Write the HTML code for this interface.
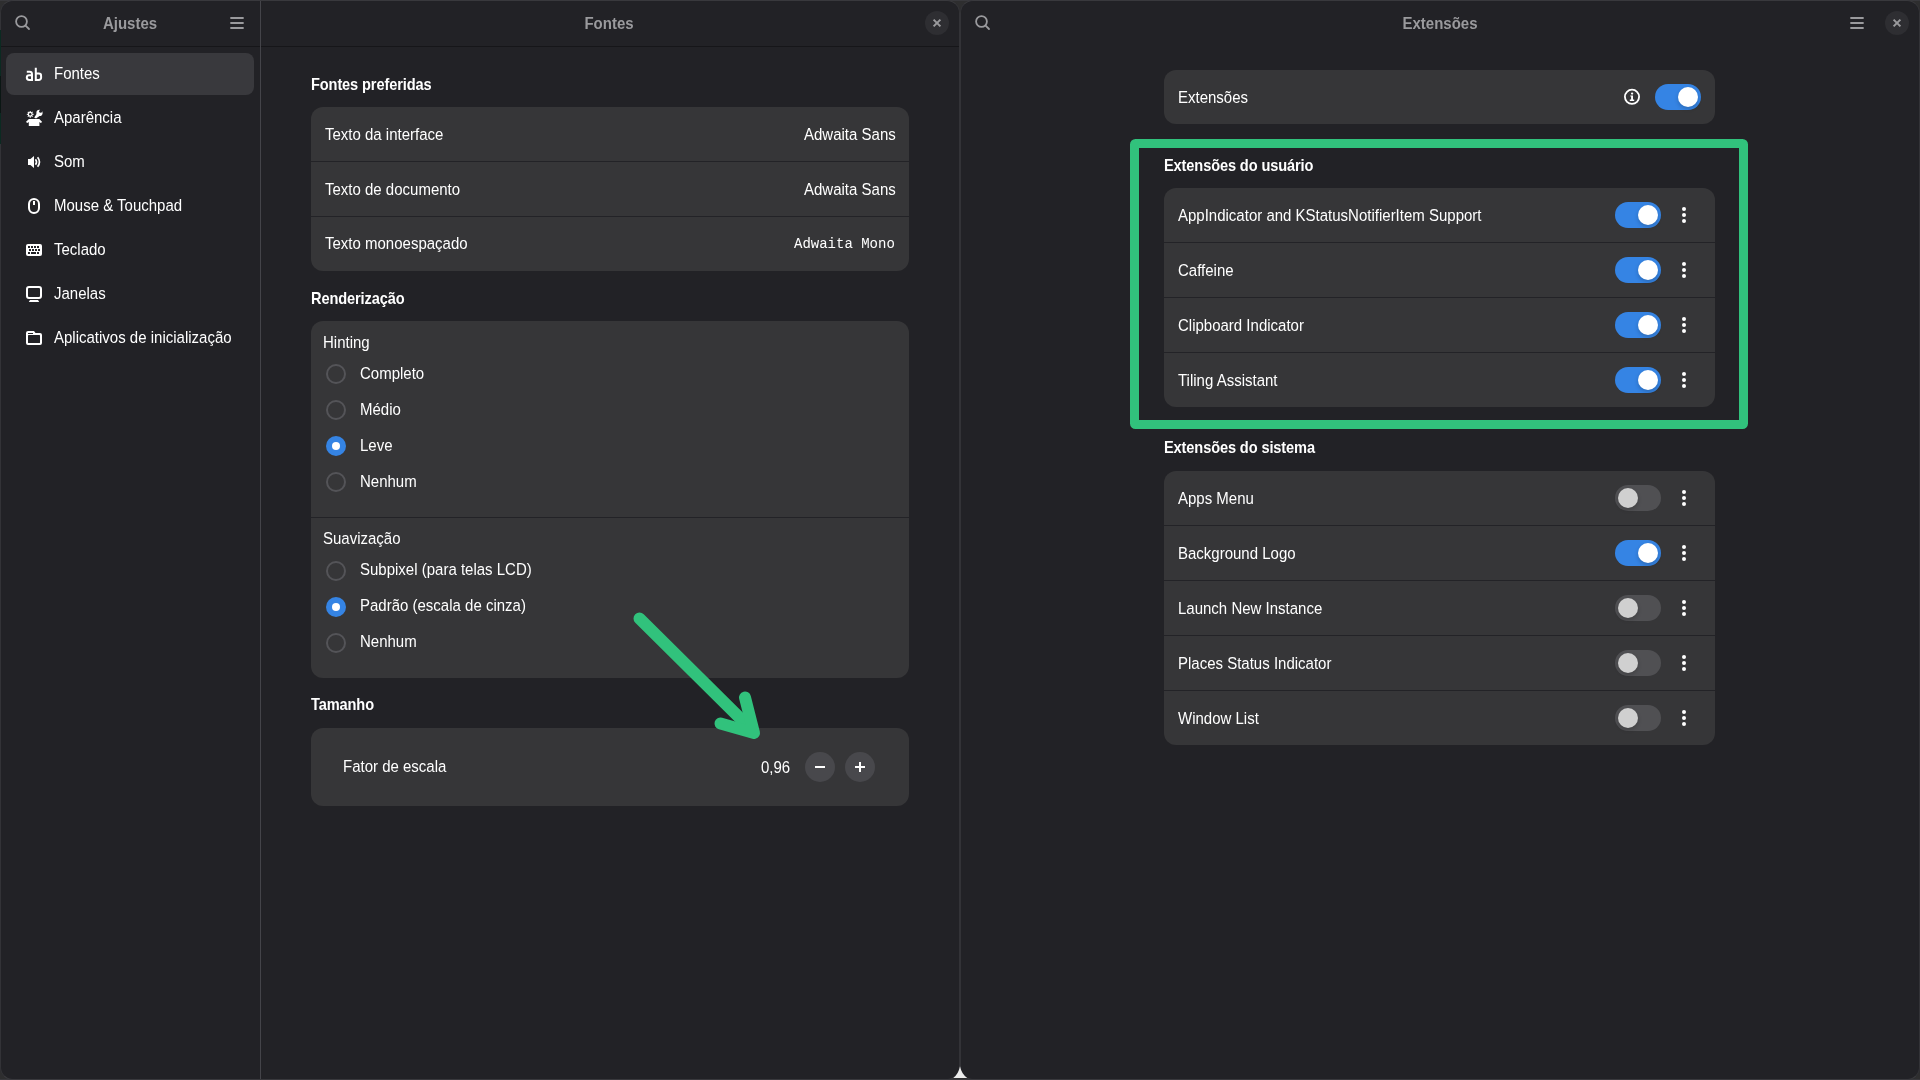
<!DOCTYPE html>
<html><head><meta charset="utf-8">
<style>
*{box-sizing:border-box;margin:0;padding:0}
html,body{width:1920px;height:1080px;overflow:hidden;background:#2e2e2f;font-family:"Liberation Sans",sans-serif;color:#ececee;font-size:15px}
.abs{position:absolute}
.win{position:absolute;background:#222226;border-radius:13px;border:1px solid #333337;border-top-color:#39393d;border-bottom-color:#39393d}
.title{font-weight:bold;color:#9a9a9d;font-size:14.5px}
.txt{will-change:transform;position:absolute;white-space:nowrap;line-height:18px;font-size:15px;transform:scaleY(1.07);transform-origin:0 14.5px}
.h{font-weight:bold;color:#fff;font-size:14.6px;letter-spacing:-0.12px;transform:scaleY(1.1)}
.side{color:#fff}
.lbl{color:#fff}
.val{color:#fff}
.mono{font-family:"Liberation Mono",monospace;font-size:14px;letter-spacing:0}
.card{position:absolute;background:#363638;border-radius:12px}
.sep{position:absolute;height:1px;background:#232327}
.sw{position:absolute;width:46px;height:26px;border-radius:13px;background:#3584e4}
.sw::after{content:"";position:absolute;top:3px;left:23px;width:20px;height:20px;border-radius:50%;background:#fff;box-shadow:0 2px 4px rgba(0,0,0,0.2)}
.sw.off{background:#505053}
.sw.off::after{left:3px;background:#d0d0d0}
.kb{position:absolute;width:4px}
.kb i{display:block;width:4px;height:4px;border-radius:50%;background:#fff;margin-bottom:2px}
.radio{position:absolute;width:20px;height:20px;border-radius:50%;border:2px solid #545458}
.radio.on{background:#3584e4;border:none}
.radio.on::after{content:"";position:absolute;left:6px;top:6px;width:8px;height:8px;border-radius:50%;background:#fff}
.btn{position:absolute;width:30px;height:30px;border-radius:50%;background:#48484c}

</style></head><body>
<div class="abs" style="left:0;top:0;width:1920px;height:1px;background:#39393d"></div>
<div class="win" style="left:0px;top:0px;width:960px;height:1080px"></div>
<div class="abs" style="left:1px;top:46px;width:958px;height:1px;background:#161619"></div>
<div class="abs" style="left:260px;top:1px;width:1px;height:1079px;background:#444449"></div>
<svg class="abs" style="left:0;top:0" width="960" height="46" viewBox="0 0 960 46">
<g fill="none" stroke="#9a9a9d" stroke-width="1.8" stroke-linecap="round">
<circle cx="21.5" cy="21.5" r="5.4"/><line x1="25.6" y1="25.6" x2="29" y2="29"/>
<line x1="231" y1="18" x2="243" y2="18"/><line x1="231" y1="23" x2="243" y2="23"/><line x1="231" y1="28" x2="243" y2="28"/>
</g>
<circle cx="937" cy="23" r="12" fill="#2e2e32"/>
<g stroke="#9a9a9d" stroke-width="2" stroke-linecap="butt"><line x1="933.6" y1="19.6" x2="940.4" y2="26.4"/><line x1="940.4" y1="19.6" x2="933.6" y2="26.4"/></g>
</svg>

<div class="txt title" style="left:-70px;width:400px;text-align:center;top:14.8px;">Ajustes</div>
<div class="txt title" style="left:409px;width:400px;text-align:center;top:14.8px;">Fontes</div>
<div class="abs" style="left:6px;top:53px;width:248px;height:42px;border-radius:8px;background:#39393d"></div>
<div class="txt side" style="left:54px;top:65.4px;">Fontes</div>
<div class="txt side" style="left:54px;top:109.4px;">Aparência</div>
<div class="txt side" style="left:54px;top:153.4px;">Som</div>
<div class="txt side" style="left:54px;top:197.4px;">Mouse &amp; Touchpad</div>
<div class="txt side" style="left:54px;top:241.4px;">Teclado</div>
<div class="txt side" style="left:54px;top:285.4px;">Janelas</div>
<div class="txt side" style="left:54px;top:329.4px;">Aplicativos de inicialização</div>
<svg class="abs" style="left:0;top:0" width="60" height="360" viewBox="0 0 60 360">
<g fill="none" stroke="#fff" stroke-width="2">
<path d="M26.8 71.8 h2.8 a2.4 2.4 0 0 1 2.4 2.4 V80 h-2.8 a2.4 2.4 0 0 1 0 -4.8 h2.8"/>
<path d="M35.8 67.8 V80 h3 a2.3 2.3 0 0 0 2.3 -2.3 v-1.8 a2.3 2.3 0 0 0 -2.3 -2.3 h-3"/>
</g>
<g fill="#fff">
<path d="M28.9 119 H39.3 L42.2 122 L40.7 123 L39.4 121.9 V126 H28.8 V121.9 L27.5 123 L25.9 122 Z"/>
<path d="M29.62 110.95 L30.78 110.95 L30.73 111.96 L31.48 112.27 L32.16 111.52 L32.98 112.34 L32.23 113.02 L32.54 113.77 L33.55 113.72 L33.55 114.88 L32.54 114.83 L32.23 115.58 L32.98 116.26 L32.16 117.08 L31.48 116.33 L30.73 116.64 L30.78 117.65 L29.62 117.65 L29.67 116.64 L28.92 116.33 L28.24 117.08 L27.42 116.26 L28.17 115.58 L27.86 114.83 L26.85 114.88 L26.85 113.72 L27.86 113.77 L28.17 113.02 L27.42 112.34 L28.24 111.52 L28.92 112.27 L29.67 111.96Z"/>
<circle cx="39.5" cy="112.9" r="3.1"/>
<path d="M34.2 117.6 L37.2 113 L40.2 115.6 L36 118.4 Z"/>
</g>
<circle cx="30.2" cy="114.3" r="1.2" fill="#222226"/>
<circle cx="40.6" cy="111.2" r="1.5" fill="#222226"/>
<path d="M39.8 109 L42.4 109 L42.4 111.8z" fill="#222226"/>
<path d="M28 159 H30.4 L34 155.9 V168.1 L30.4 165 H28 Z" fill="#fff"/>
<path d="M35.5 159.2 Q37.6 162 35.5 164.8" fill="none" stroke="#fff" stroke-width="1.6"/>
<path d="M37.6 157.3 Q41.3 162 37.6 166.7" fill="none" stroke="#fff" stroke-width="1.7"/>
<rect x="29" y="199" width="10" height="14" rx="5" fill="none" stroke="#fff" stroke-width="2"/>
<rect x="33" y="201" width="2" height="4" fill="#fff"/>
<rect x="26" y="244" width="16" height="12" rx="2" fill="#fff"/>
<g fill="#222226"><rect x="28" y="246" width="2" height="2"/><rect x="31" y="246" width="2" height="2"/><rect x="34" y="246" width="2" height="2"/><rect x="37" y="246" width="2" height="2"/>
<rect x="29" y="249" width="2" height="2"/><rect x="32" y="249" width="2" height="2"/><rect x="35" y="249" width="2" height="2"/><rect x="38" y="249" width="2" height="2"/>
<rect x="28" y="252" width="2" height="2"/><rect x="31" y="252" width="5" height="2"/><rect x="37" y="252" width="2" height="2"/></g>
<rect x="27" y="287" width="14" height="11" rx="2" fill="none" stroke="#fff" stroke-width="2"/>
<path d="M30 300 H38 L39.2 302 H28.8z" fill="#fff"/>
<path d="M26 333 a2 2 0 0 1 2 -2 h6 l1.5 2 h4.5 a2 2 0 0 1 2 2 v8 a2 2 0 0 1 -2 2 h-12 a2 2 0 0 1 -2 -2 z" fill="#fff"/>
<rect x="28" y="335" width="12" height="8" rx="0.5" fill="#222226"/>
<rect x="28" y="333" width="5" height="1" fill="#222226"/>
</svg>

<div class="txt h" style="left:311px;top:75.8px;">Fontes preferidas</div>
<div class="card" style="left:311px;top:107px;width:598px;height:164px"></div>
<div class="sep" style="left:311px;top:161px;width:598px"></div>
<div class="sep" style="left:311px;top:216px;width:598px"></div>
<div class="txt lbl" style="left:325px;top:125.8px;">Texto da interface</div>
<div class="txt val" style="right:1024.5px;top:125.8px;">Adwaita Sans</div>
<div class="txt lbl" style="left:325px;top:180.5px;">Texto de documento</div>
<div class="txt val" style="right:1024.5px;top:180.5px;">Adwaita Sans</div>
<div class="txt lbl" style="left:325px;top:235.1px;">Texto monoespaçado</div>
<div class="txt val mono" style="right:1025px;top:235.1px;">Adwaita Mono</div>
<div class="txt h" style="left:311px;top:289.9px;">Renderização</div>
<div class="card" style="left:311px;top:321px;width:598px;height:357px"></div>
<div class="sep" style="left:311px;top:517px;width:598px"></div>
<div class="txt lbl" style="left:323px;top:333.6px;">Hinting</div>
<div class="radio" style="left:326px;top:363.7px"></div>
<div class="txt lbl" style="left:359.5px;top:365.0px;">Completo</div>
<div class="radio" style="left:326px;top:399.8px"></div>
<div class="txt lbl" style="left:359.5px;top:401.0px;">Médio</div>
<div class="radio on" style="left:326px;top:435.9px"></div>
<div class="txt lbl" style="left:359.5px;top:436.9px;">Leve</div>
<div class="radio" style="left:326px;top:471.9px"></div>
<div class="txt lbl" style="left:359.5px;top:472.5px;">Nenhum</div>
<div class="txt lbl" style="left:323px;top:530.2px;">Suavização</div>
<div class="radio" style="left:326px;top:560.8px"></div>
<div class="txt lbl" style="left:359.5px;top:561.3px;">Subpixel (para telas LCD)</div>
<div class="radio on" style="left:326px;top:597.0px"></div>
<div class="txt lbl" style="left:359.5px;top:597.3px;">Padrão (escala de cinza)</div>
<div class="radio" style="left:326px;top:633.0px"></div>
<div class="txt lbl" style="left:359.5px;top:633.2px;">Nenhum</div>
<div class="txt h" style="left:311px;top:696.4px;">Tamanho</div>
<div class="card" style="left:311px;top:728px;width:598px;height:78px"></div>
<div class="txt lbl" style="left:343.4px;top:758.4px;">Fator de escala</div>
<div class="txt lbl" style="right:1129.5px;top:758.5px;">0,96</div>
<div class="btn" style="left:805px;top:752px"></div>
<div class="btn" style="left:845px;top:752px"></div>
<svg class="abs" style="left:800px;top:750px" width="80" height="35" viewBox="800 750 80 35">
<g stroke="#fff" stroke-width="2"><line x1="815" y1="767" x2="825" y2="767"/><line x1="855" y1="767" x2="865" y2="767"/><line x1="860" y1="762" x2="860" y2="772"/></g>
</svg>

<div class="win" style="left:960px;top:0px;width:960px;height:1080px"></div>
<div class="txt title" style="left:1240px;width:400px;text-align:center;top:14.8px;">Extensões</div>
<div class="card" style="left:1164px;top:70px;width:551px;height:54px"></div>
<svg class="abs" style="left:961px;top:0" width="959" height="130" viewBox="961 0 959 130">
<g fill="none" stroke="#9a9a9d" stroke-width="1.8" stroke-linecap="round">
<circle cx="981.5" cy="21.5" r="5.4"/><line x1="985.6" y1="25.6" x2="989" y2="29"/>
<line x1="1851" y1="18" x2="1863" y2="18"/><line x1="1851" y1="23" x2="1863" y2="23"/><line x1="1851" y1="28" x2="1863" y2="28"/>
</g>
<circle cx="1897" cy="23" r="12" fill="#2e2e32"/>
<g stroke="#9a9a9d" stroke-width="2"><line x1="1893.6" y1="19.6" x2="1900.4" y2="26.4"/><line x1="1900.4" y1="19.6" x2="1893.6" y2="26.4"/></g>
<circle cx="1632" cy="96.8" r="7.1" fill="none" stroke="#fff" stroke-width="1.8"/>
<circle cx="1632.1" cy="93.6" r="1.15" fill="#fff"/>
<path d="M1630.3 95.5 H1633 V99.6 H1634.2 V100.9 H1629.8 V99.6 H1631.1 V96.6 H1630.3 Z" fill="#fff"/>
</svg>

<div class="txt lbl" style="left:1177.8px;top:88.7px;">Extensões</div>
<div class="sw" style="left:1655px;top:84px"></div>
<div class="txt h" style="left:1164px;top:156.9px;">Extensões do usuário</div>
<div class="card" style="left:1164px;top:188px;width:551px;height:219px"></div>
<div class="txt lbl" style="left:1177.8px;top:206.8px;">AppIndicator and KStatusNotifierItem Support</div>
<div class="sw" style="left:1615px;top:202px"></div>
<div class="kb" style="left:1682px;top:207px"><i></i><i></i><i></i></div>
<div class="sep" style="left:1164px;top:242px;width:551px"></div>
<div class="txt lbl" style="left:1177.8px;top:261.8px;">Caffeine</div>
<div class="sw" style="left:1615px;top:257px"></div>
<div class="kb" style="left:1682px;top:262px"><i></i><i></i><i></i></div>
<div class="sep" style="left:1164px;top:297px;width:551px"></div>
<div class="txt lbl" style="left:1177.8px;top:316.8px;">Clipboard Indicator</div>
<div class="sw" style="left:1615px;top:312px"></div>
<div class="kb" style="left:1682px;top:317px"><i></i><i></i><i></i></div>
<div class="sep" style="left:1164px;top:352px;width:551px"></div>
<div class="txt lbl" style="left:1177.8px;top:371.8px;">Tiling Assistant</div>
<div class="sw" style="left:1615px;top:367px"></div>
<div class="kb" style="left:1682px;top:372px"><i></i><i></i><i></i></div>
<div class="txt h" style="left:1164px;top:439.4px;">Extensões do sistema</div>
<div class="card" style="left:1164px;top:471px;width:551px;height:274px"></div>
<div class="txt lbl" style="left:1177.8px;top:489.5px;">Apps Menu</div>
<div class="sw off" style="left:1615px;top:485px"></div>
<div class="kb" style="left:1682px;top:490px"><i></i><i></i><i></i></div>
<div class="sep" style="left:1164px;top:525px;width:551px"></div>
<div class="txt lbl" style="left:1177.8px;top:544.5px;">Background Logo</div>
<div class="sw" style="left:1615px;top:540px"></div>
<div class="kb" style="left:1682px;top:545px"><i></i><i></i><i></i></div>
<div class="sep" style="left:1164px;top:580px;width:551px"></div>
<div class="txt lbl" style="left:1177.8px;top:599.5px;">Launch New Instance</div>
<div class="sw off" style="left:1615px;top:595px"></div>
<div class="kb" style="left:1682px;top:600px"><i></i><i></i><i></i></div>
<div class="sep" style="left:1164px;top:635px;width:551px"></div>
<div class="txt lbl" style="left:1177.8px;top:654.5px;">Places Status Indicator</div>
<div class="sw off" style="left:1615px;top:650px"></div>
<div class="kb" style="left:1682px;top:655px"><i></i><i></i><i></i></div>
<div class="sep" style="left:1164px;top:690px;width:551px"></div>
<div class="txt lbl" style="left:1177.8px;top:709.5px;">Window List</div>
<div class="sw off" style="left:1615px;top:705px"></div>
<div class="kb" style="left:1682px;top:710px"><i></i><i></i><i></i></div>
<div class="abs" style="left:0;top:30px;width:1px;height:114px;background:#0b2a21"></div>
<div class="abs" style="left:0;top:76px;width:1px;height:37px;background:#0a1613"></div>
<svg class="abs" style="left:0;top:0" width="1920" height="1080" viewBox="0 0 1920 1080">
<rect x="1134.5" y="143.5" width="609" height="281" rx="1" fill="none" stroke="#31c27c" stroke-width="9"/>
<g fill="none" stroke="#31c27c" stroke-width="12" stroke-linecap="round" stroke-linejoin="round">
<line x1="639.5" y1="618.5" x2="752" y2="730"/>
<polyline points="745,697.5 754,733 720.5,723.5"/>
</g>
</svg>

<div class="abs" style="left:0;top:1079px;width:1920px;height:1px;background:#39393d"></div>
<svg class="abs" style="left:940px;top:1050px" width="40" height="30" viewBox="940 1050 40 30"><path d="M953.3 1078 Q958.5 1074 960 1066.3 Q961.5 1074 967.2 1078 Z" fill="#ececec"/></svg>
</body></html>
